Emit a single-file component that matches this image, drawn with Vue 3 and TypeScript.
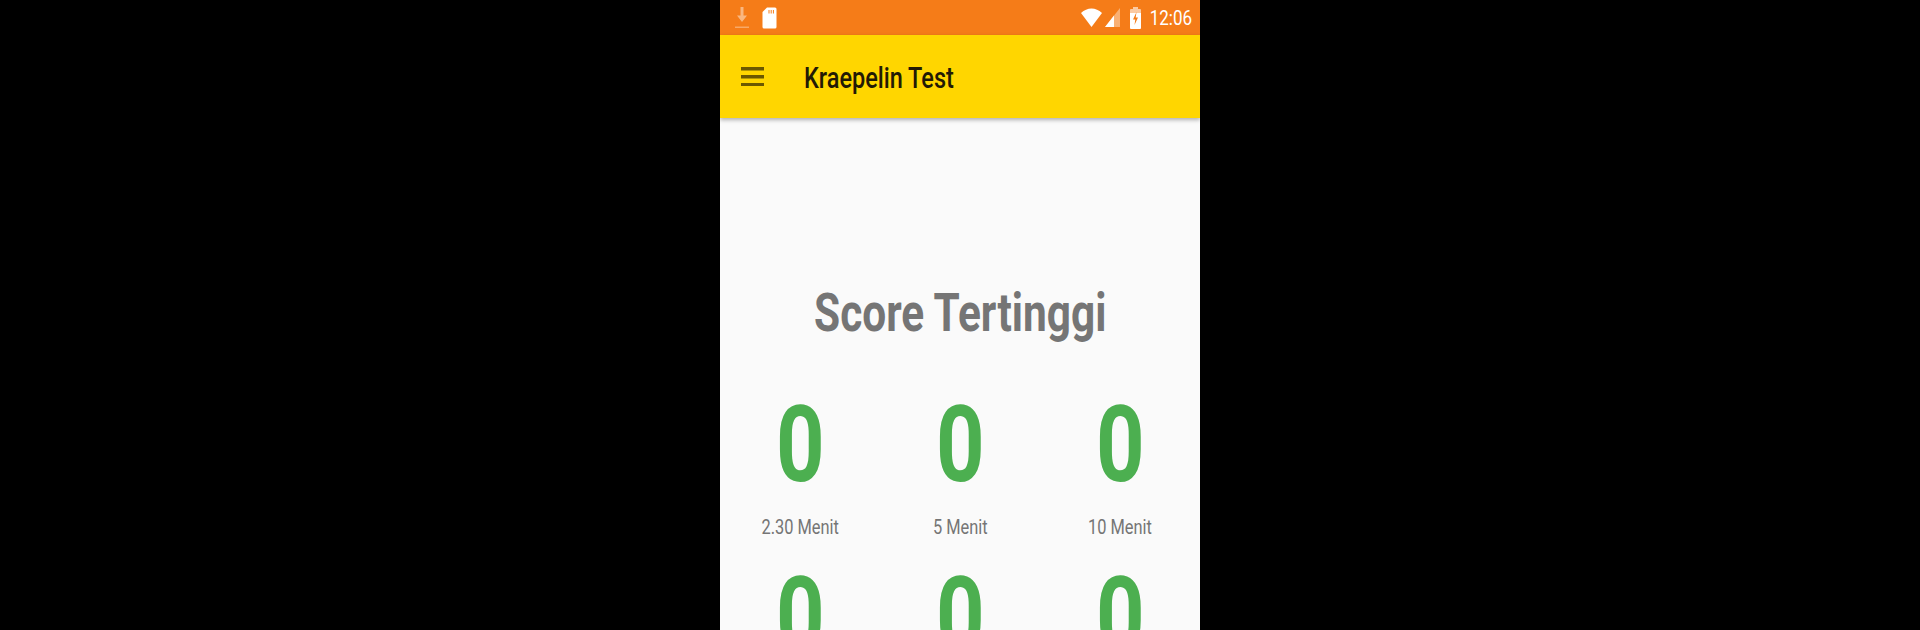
<script setup lang="ts">
const scores: { value: number; label?: string }[] = [
  { value: 0, label: '2.30 Menit' },
  { value: 0, label: '5 Menit' },
  { value: 0, label: '10 Menit' },
  { value: 0 },
  { value: 0 },
  { value: 0 },
]
</script>

<template>
  <div class="page">
    <div class="phone">
      <div class="status">
        <div class="status-left">
          <svg class="ic-dl" viewBox="0 0 14 22" width="14" height="22">
            <path d="M5.500 0h3v8.500h3.500L7 15 2 8.500h3.500z" fill="#fff" opacity=".45" />
            <rect x="0" y="19.500" width="14" height="1.500" fill="#fff" opacity=".35" />
          </svg>
          <svg class="ic-sd" viewBox="0 0 15 22" width="15" height="22">
            <path d="M5 0.500h8a1.500 1.500 0 0 1 1.500 1.500v18a1.500 1.500 0 0 1-1.500 1.500H2A1.500 1.500 0 0 1 .5 20V5z" fill="#fff" />
            <path d="M6.500 3h1v3.500h-1zM8.700 3h1v3.500h-1zM10.900 3h1v3.500h-1z" fill="#f57c18" />
          </svg>
        </div>
        <div class="status-right">
          <svg viewBox="0 0 21 19" width="21" height="19">
            <path d="M10.500 19 0 5C3.200 2 6.600.5 10.500.5S17.800 2 21 5z" fill="#fff" />
          </svg>
          <svg class="ic-sig" viewBox="0 0 15 19" width="15" height="19">
            <path d="M0 19 15 0v19z" fill="#fff" opacity=".4" />
            <path d="M0 19 9 7.600V19z" fill="#fff" />
          </svg>
          <svg class="ic-bat" viewBox="0 0 11 22" width="11" height="22">
            <path d="M3 0h5v2h2a1 1 0 0 1 1 1v3H0V3a1 1 0 0 1 1-1h2z" fill="#fff" opacity=".6" />
            <path d="M0 6h11v15a1 1 0 0 1-1 1H1a1 1 0 0 1-1-1z" fill="#fff" />
            <path d="M6.500 5 3 12.500h2.300L4.500 18 8 10.500H5.700z" fill="#f57c18" />
          </svg>
          <span class="time"><span class="sq">12:06</span></span>
        </div>
      </div>
      <header class="bar">
        <svg class="menu" viewBox="0 0 23 19" width="23" height="19">
          <path d="M0 0h23v3.400H0zM0 8h23v3.400H0zM0 16h23v3H0z" fill="#6b5800" />
        </svg>
        <h1 class="bar-title"><span class="sq">Kraepelin Test</span></h1>
      </header>
      <main class="content">
        <h2 class="heading"><span class="sq">Score Tertinggi</span></h2>
        <div class="grid">
          <div v-for="(s, i) in scores" :key="i" class="cell">
            <div class="num"><span class="sq">{{ s.value }}</span></div>
            <div v-if="s.label" class="label"><span class="sq">{{ s.label }}</span></div>
          </div>
        </div>
      </main>
    </div>
  </div>
</template>

<style scoped>
.page {
  width: 1920px;
  height: 630px;
  background: #000;
  display: flex;
  justify-content: center;
  overflow: hidden;
  font-family: Roboto, "Liberation Sans", sans-serif;
}
.phone {
  width: 480px;
  height: 630px;
  background: #fafafa;
  display: flex;
  flex-direction: column;
  overflow: hidden;
}
.sq {
  display: inline-block;
  transform: scaleX(0.82);
  white-space: nowrap;
}
.status {
  height: 35px;
  flex: none;
  background: #f57c18;
  display: flex;
  align-items: center;
  justify-content: space-between;
  padding: 0 12px 0 15px;
}
.status-left,
.status-right {
  display: flex;
  align-items: center;
}
.ic-sd {
  margin-left: 13px;
}
.ic-sig {
  margin-left: 3px;
}
.ic-bat {
  margin-left: 10px;
}
.time {
  width: 42px;
  margin-left: 5px;
  text-align: center;
  color: #fff;
  font-size: 20px;
  line-height: 38px;
}
.time .sq {
  transform: scaleX(0.85);
}
.bar {
  height: 83px;
  flex: none;
  background: #ffd600;
  display: flex;
  align-items: center;
  padding-left: 21px;
  box-shadow: 0 2px 4px rgba(0, 0, 0, 0.3);
  position: relative;
}
.bar-title {
  margin: 4px 0 0 40px;
  font-size: 29px;
  font-weight: 500;
  color: #231a05;
  line-height: 1;
}
.bar-title .sq {
  transform: scaleX(0.81);
  transform-origin: left center;
}
.content {
  flex: 1;
  padding-top: 163px;
}
.heading {
  margin: 0;
  text-align: center;
  font-size: 54px;
  font-weight: 700;
  line-height: 64px;
  color: #757575;
}
.heading .sq {
  transform: scaleX(0.785);
}
.grid {
  margin-top: 45px;
  display: grid;
  grid-template-columns: repeat(3, 160px);
}
.cell {
  height: 171px;
  text-align: center;
}
.num {
  font-size: 106px;
  font-weight: 700;
  line-height: 110px;
  color: #4caf50;
}
.num .sq {
  transform: scaleX(0.8);
}
.label {
  margin-top: 15px;
  font-size: 20px;
  line-height: 24px;
  color: #757575;
}
</style>
